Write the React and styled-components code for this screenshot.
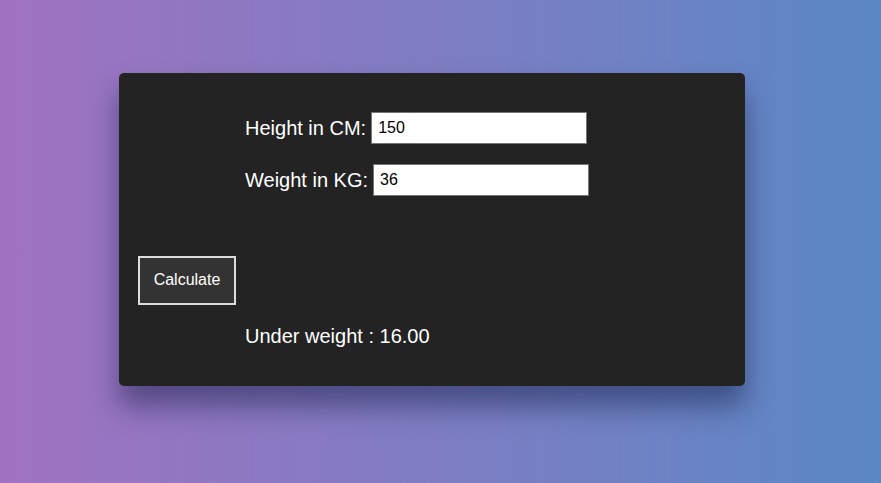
import React from "react";
import styled, { createGlobalStyle } from "styled-components";

const Global = createGlobalStyle`
  html, body { margin: 0; padding: 0; }
  body {
    min-height: 100vh;
    background: linear-gradient(to right, #a072c1, #5b88c5);
    font-family: "Liberation Sans", Arial, sans-serif;
  }
`;

const Page = styled.div`
  min-height: 100vh;
  box-sizing: border-box;
  padding: 73px 0 0 119px;
`;

const Card = styled.div`
  width: 626px;
  height: 313px;
  box-sizing: border-box;
  background: #232323;
  border-radius: 5px;
  box-shadow: 0 20px 28px rgba(20, 30, 70, 0.5);
  padding: 39px 0 0 19px;
  display: flex;
  flex-direction: column;
  color: #fff;
`;

const Form = styled.div`
  display: flex;
  flex-direction: column;
  gap: 20px;
  padding-left: 107px;
`;

const Row = styled.label`
  display: flex;
  align-items: center;
  gap: 5px;
  font-size: 20px;
`;

const Input = styled.input`
  box-sizing: border-box;
  width: 216px;
  height: 32px;
  border: 1px solid #767676;
  background: #fff;
  color: #000;
  padding: 0 6px;
  font-family: "Liberation Sans", Arial, sans-serif;
  font-size: 16px;
  outline: none;
`;

const Button = styled.button`
  margin-top: 60px;
  align-self: flex-start;
  width: 98px;
  height: 49px;
  box-sizing: border-box;
  background: #333;
  border: 2px solid #dcdcdc;
  color: #fff;
  font-family: "Liberation Sans", Arial, sans-serif;
  font-size: 16px;
  padding: 0 0 2px;
`;

const Result = styled.div`
  margin-top: 20px;
  padding-left: 107px;
  font-size: 20px;
  line-height: 23px;
`;

export default function App() {
  return (
    <>
      <Global />
      <Page>
        <Card>
          <Form>
            <Row>
              Height in CM:
              <Input defaultValue="150" />
            </Row>
            <Row>
              Weight in KG:
              <Input defaultValue="36" />
            </Row>
          </Form>
          <Button>Calculate</Button>
          <Result>Under weight : 16.00</Result>
        </Card>
      </Page>
    </>
  );
}
